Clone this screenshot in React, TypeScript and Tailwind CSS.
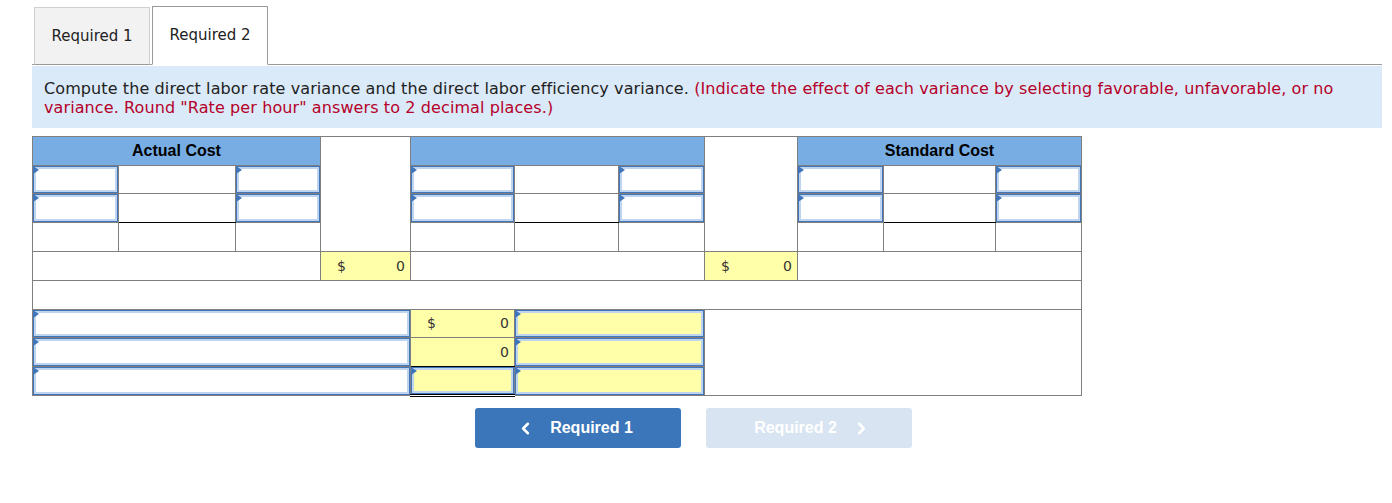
import { ChevronLeft, ChevronRight } from "lucide-react";

const cols = [86, 117, 85, 90, 104, 104, 86, 93, 86, 112, 86];

function Inp({ yellow = false }: { yellow?: boolean }) {
  return (
    <div
      className={`relative h-full w-full border border-[#4276b8] shadow-[inset_0_0_0_2px_#bfd4ef] ${
        yellow ? "bg-[#ffffaa]" : "bg-white"
      }`}
    >
      <span className="absolute -left-px -top-px h-0 w-0 border-y-[4px] border-l-[6px] border-y-transparent border-l-[#3f76bb]" />
    </div>
  );
}

function Money({ sign = true }: { sign?: boolean }) {
  return (
    <div className="flex h-full items-center justify-between bg-[#ffffaa] pl-[16px] pr-[5px] text-[14px] text-[#333]">
      <span>{sign ? "$" : ""}</span>
      <span>0</span>
    </div>
  );
}

const td = "border border-[#7f7f7f] p-0";
const tall = `${td} h-[29px]`;
const short = `${td} h-[28px]`;

export default function App() {
  return (
    <div className="min-h-[503px] bg-white pt-[6px] font-['DejaVu_Sans',sans-serif] text-[#000]">
      {/* tabs */}
      <div className="ml-[32px] mr-[10px] flex items-end border-b border-[#9a9a9a] pl-[2px]">
        <div className="-mb-px flex h-[58px] w-[116px] items-center justify-center border border-[#cfcfcf] border-b-[#9a9a9a] bg-[#f2f2f2] text-[15px] text-[#222]">
          Required 1
        </div>
        <div className="-mb-px ml-[2px] flex h-[59px] w-[116px] items-center justify-center border border-[#9a9a9a] border-b-white bg-white text-[15px] text-[#222]">
          Required 2
        </div>
      </div>

      {/* instructions */}
      <div className="ml-[32px] mr-[10px] mt-px bg-[#dbeaf8] px-[12px] pb-[11px] pt-[13px] text-[16px] leading-[19px] tracking-[0.1px] text-[#222]">
        Compute the direct labor rate variance and the direct labor efficiency variance.{" "}
        <span className="text-[#b5002a]">
          (Indicate the effect of each variance by selecting favorable, unfavorable, or no variance. Round "Rate per
          hour" answers to 2 decimal places.)
        </span>
      </div>

      <table className="ml-[32px] mt-[8px] table-fixed border-collapse" style={{ width: 1049 }}>
        <colgroup>
          {cols.map((w, i) => (
            <col key={i} style={{ width: w }} />
          ))}
        </colgroup>
        <tbody>
          <tr>
            <td colSpan={3} className={`${tall} bg-[#78ade3] text-center font-['Liberation_Sans',Arial,sans-serif] text-[16px] font-bold`}>
              Actual Cost
            </td>
            <td rowSpan={4} className={`${td} bg-white`} />
            <td colSpan={3} className={`${tall} bg-[#78ade3]`} />
            <td rowSpan={4} className={`${td} bg-white`} />
            <td colSpan={3} className={`${tall} bg-[#78ade3] text-center font-['Liberation_Sans',Arial,sans-serif] text-[16px] font-bold`}>
              Standard Cost
            </td>
          </tr>
          <tr>
            <td className={short}><Inp /></td>
            <td className={short} />
            <td className={short}><Inp /></td>
            <td className={short}><Inp /></td>
            <td className={short} />
            <td className={short}><Inp /></td>
            <td className={short}><Inp /></td>
            <td className={short} />
            <td className={short}><Inp /></td>
          </tr>
          <tr>
            <td className={tall}><Inp /></td>
            <td className={`${tall} border-b-black`} />
            <td className={tall}><Inp /></td>
            <td className={tall}><Inp /></td>
            <td className={`${tall} border-b-black`} />
            <td className={tall}><Inp /></td>
            <td className={tall}><Inp /></td>
            <td className={`${tall} border-b-black`} />
            <td className={tall}><Inp /></td>
          </tr>
          <tr>
            <td className={tall} />
            <td className={tall} />
            <td className={tall} />
            <td className={tall} />
            <td className={tall} />
            <td className={tall} />
            <td className={tall} />
            <td className={tall} />
            <td className={tall} />
          </tr>
          <tr>
            <td colSpan={3} className={tall} />
            <td className={tall}><Money /></td>
            <td colSpan={3} className={tall} />
            <td className={tall}><Money /></td>
            <td colSpan={3} className={tall} />
          </tr>
          <tr>
            <td colSpan={11} className={tall} />
          </tr>
          <tr>
            <td colSpan={4} className={short}><Inp /></td>
            <td className={short}><Money /></td>
            <td colSpan={2} className={short}><Inp yellow /></td>
            <td colSpan={4} rowSpan={3} className={td} />
          </tr>
          <tr>
            <td colSpan={4} className={tall}><Inp /></td>
            <td className={`${tall} border-b-black`}><Money sign={false} /></td>
            <td colSpan={2} className={tall}><Inp yellow /></td>
          </tr>
          <tr>
            <td colSpan={4} className={tall}><Inp /></td>
            <td className={`${tall} border-b-[3px] border-b-black [border-bottom-style:double]`}><Inp yellow /></td>
            <td colSpan={2} className={tall}><Inp yellow /></td>
          </tr>
        </tbody>
      </table>

      {/* navigation */}
      <div className="mt-[11px] flex justify-center gap-[25px] pr-[5px] font-['Liberation_Sans',Arial,sans-serif] text-[16px] font-bold text-white">
        <button className="flex h-[40px] w-[206px] items-center justify-center gap-[15px] rounded-[3px] bg-[#3a76b9]">
          <ChevronLeft size={19} strokeWidth={3.2} className="-ml-[7px]" />
          Required 1
        </button>
        <button className="flex h-[40px] w-[206px] items-center justify-center gap-[15px] rounded-[3px] bg-[#d8e4f1]">
          Required 2
          <ChevronRight size={19} strokeWidth={3.2} className="-mr-[7px]" />
        </button>
      </div>
    </div>
  );
}
